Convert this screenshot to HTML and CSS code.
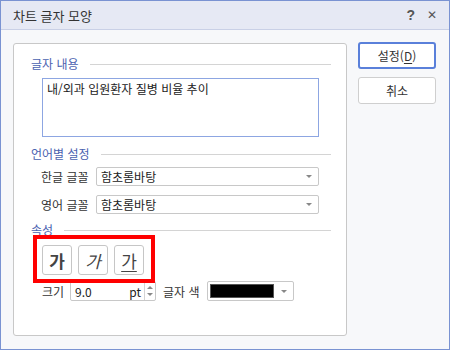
FILE: index.html
```html
<!DOCTYPE html>
<html lang="ko">
<head>
<meta charset="utf-8">
<link rel="stylesheet" href="styles.css">
</head>
<body>
<div class="window">
  <div class="titlebar">
    <span class="title">차트 글자 모양</span>
    <span class="tb-btns"><span class="help">?</span><span class="close">✕</span></span>
  </div>
  <div class="body">
    <div class="panel">
      <div class="legend legend-first"><span>글자 내용</span><i></i></div>
      <div class="textarea">내/외과 입원환자 질병 비율 추이</div>

      <div class="legend legend-lang"><span>언어별 설정</span><i></i></div>
      <div class="row row-font1">
        <span class="lbl">한글 글꼴</span>
        <div class="select"><span>함초롬바탕</span><b class="arrow"></b></div>
      </div>
      <div class="row row-font2">
        <span class="lbl">영어 글꼴</span>
        <div class="select"><span>함초롬바탕</span><b class="arrow"></b></div>
      </div>

      <div class="legend legend-attr"><span>속성</span><i></i></div>
      <div class="redbox">
        <span class="tog bold">가</span>
        <span class="tog italic">가</span>
        <span class="tog under">가</span>
      </div>
      <div class="row row-size">
        <span class="lbl2">크기</span>
        <div class="spin">
          <span class="val">9.0</span><span class="unit">pt</span>
          <span class="arrows"><b class="up"></b><b class="down"></b></span>
        </div>
        <span class="lbl3">글자 색</span>
        <div class="color"><span class="swatch"></span><b class="arrow"></b></div>
      </div>
    </div>
    <div class="side">
      <div class="btn primary">설정(<u>D</u>)</div>
      <div class="btn">취소</div>
    </div>
  </div>
</div>
</body>
</html>
```

FILE: styles.css
```css
* { box-sizing: border-box; }
html, body { margin: 0; padding: 0; }
body {
  width: 450px; height: 350px; overflow: hidden;
  font-family: "Noto Sans CJK KR", "Noto Sans", sans-serif;
  font-size: 12px; color: #333;
}
.window {
  width: 450px; height: 350px;
  border: 1px solid #7a93d2;
  background: #f7f8fa;
  display: flex; flex-direction: column;
}
.titlebar {
  height: 29px; flex: none;
  background: #e6e9f4;
  border-bottom: 1px solid #c9d0e6;
  display: flex; align-items: center; justify-content: space-between;
  padding: 0 12px 0 12px;
}
.title { font-size: 13px; color: #333; }
.tb-btns { display: flex; gap: 12px; align-items: center; color: #444; }
.help { font-size: 14px; font-family: "Liberation Sans", sans-serif; color: #555; font-weight: bold; }
.close { font-size: 12px; font-family: "DejaVu Sans", sans-serif; color: #555; }

.body { flex: 1; display: flex; padding: 13px 0 0 12px; }
.panel {
  width: 334px; height: 293px;
  background: #fff;
  border: 1px solid #c8c8c8;
  border-radius: 3px;
  padding: 0 15px 0 17px;
}
.legend { display: flex; align-items: center; gap: 11px; color: #4a62b0; height: 16px; }
.legend span { line-height: 16px; white-space: nowrap; }
.legend i { flex: 1; height: 1px; background: #d4d4d4; margin-top: 1px; }
.legend-first { margin-top: 12px; }
.textarea {
  margin: 6px 12px 0 11px;
  height: 59px;
  border: 1px solid #8da6e2;
  padding: 2px 4px;
  color: #222;
  line-height: 16px;
}
.legend-lang { margin-top: 9px; }
.row { display: flex; align-items: center; }
.row-font1 { margin-top: 5px; }
.row-font2 { margin-top: 9px; }
.lbl { width: 65px; padding-left: 10px; color: #333; white-space: nowrap; }
.select {
  width: 223px; height: 19px;
  border: 1px solid #c8c8c8; border-radius: 2px;
  display: flex; align-items: center; justify-content: space-between;
  padding: 0 6px 0 4px; color: #222;
}
.arrow {
  width: 0; height: 0;
  border-left: 3px solid transparent; border-right: 3px solid transparent;
  border-top: 3px solid #888;
}
.legend-attr { margin-top: 8px; }
.redbox {
  position: relative;
  margin: -3px 0 0 2px;
  width: 122px; height: 48px;
  border: 4px solid #f00;
  display: flex; gap: 6px; padding: 6px 0 0 5px;
}
.tog {
  width: 30px; height: 30px;
  border: 1px solid #c6c6c6; border-radius: 3px;
  display: flex; align-items: center; justify-content: center;
  font-size: 17px; color: #444;
}
.tog.bold { font-weight: bold; }
.tog.italic { font-style: italic; }
.tog.under { text-decoration: underline; text-underline-offset: 3px; text-decoration-thickness: 1px; }
.row-size { margin-top: -2px; }
.lbl2 { width: 39px; padding-left: 11px; white-space: nowrap; }
.spin {
  width: 86px; height: 20px;
  border: 1px solid #c8c8c8; border-radius: 2px;
  display: flex; align-items: center;
  padding-left: 4px; color: #222;
}
.spin .val { flex: 1; }
.spin .unit { margin-right: 3px; }
.arrows {
  width: 11px; height: 18px;
  border-left: 1px solid #d4d4d4;
  display: flex; flex-direction: column; align-items: center; justify-content: center; gap: 4px;
}
.arrows .up { width: 0; height: 0; border-left: 3px solid transparent; border-right: 3px solid transparent; border-bottom: 3px solid #888; }
.arrows .down { width: 0; height: 0; border-left: 3px solid transparent; border-right: 3px solid transparent; border-top: 3px solid #888; }
.lbl3 { margin-left: 7px; width: 44px; white-space: nowrap; }
.color {
  width: 87px; height: 20px;
  border: 1px solid #c8c8c8; border-radius: 2px;
  display: flex; align-items: center; padding: 0 6px 0 2px; gap: 7px;
}
.swatch { width: 70px; height: 14px; background: #000; border: 1px solid #555; }

.side { margin-left: 11px; margin-top: -1px; display: flex; flex-direction: column; gap: 8px; }
.btn {
  width: 78px; height: 27px;
  border: 1px solid #cfcfcf; border-radius: 3px;
  background: #fff;
  display: flex; align-items: center; justify-content: center;
  color: #333;
}
.btn.primary { border: 2px solid #5a80da; }
.btn u { text-underline-offset: 2px; }
```
